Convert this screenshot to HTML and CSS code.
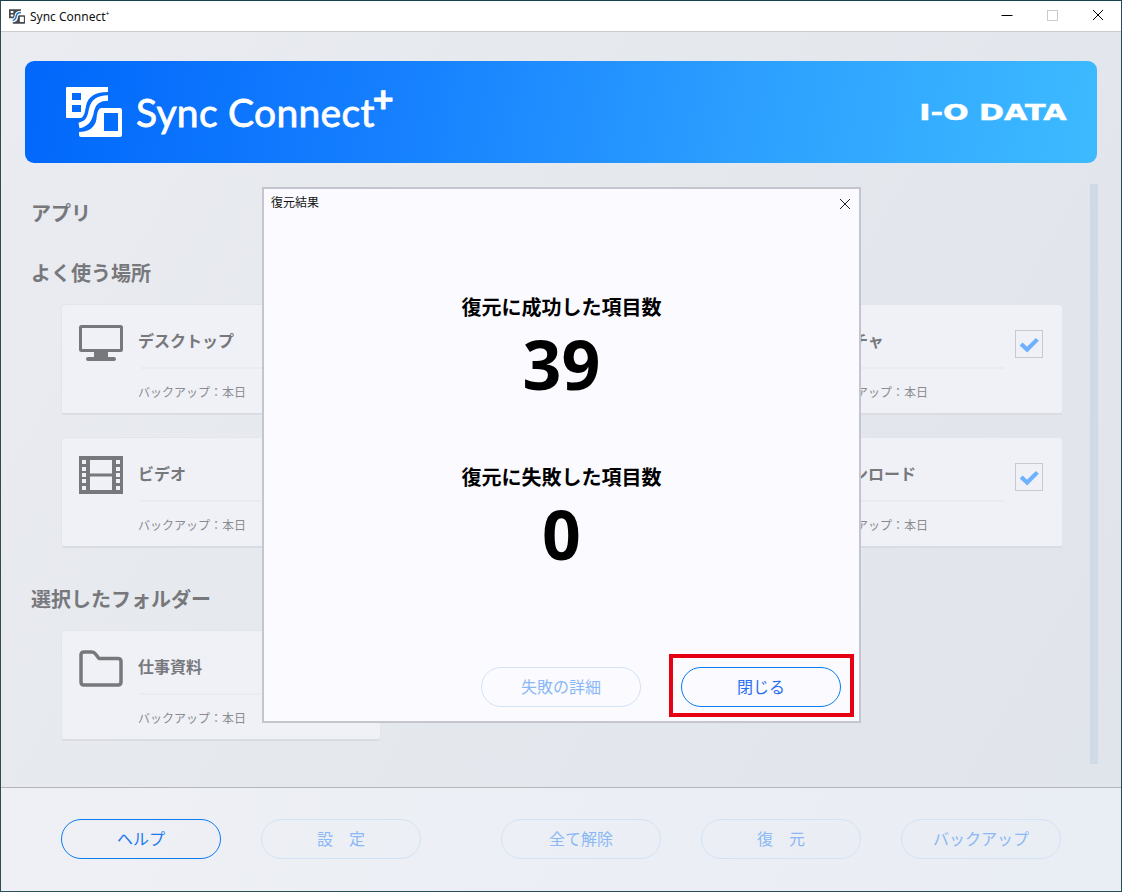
FILE: index.html
```html
<!DOCTYPE html>
<html lang="ja">
<head>
<meta charset="utf-8">
<title>Sync Connect+</title>
<link rel="stylesheet" href="styles.css">
</head>
<body>
<svg class="defs" width="0" height="0" aria-hidden="true">
  <symbol id="mark" viewBox="0 0 56 50">
    <path fill-rule="evenodd" d="M1 0H42V5C30 5 22 9 20 19C19 25 18 30 15 31H1Q0 31 0 30V1Q0 0 1 0ZM6 6V13H15V6ZM6 18V25H15V18Z"/>
    <path fill="none" stroke="currentColor" stroke-width="5.500" d="M42 11C32 11 27 15 25.500 23C24 32 21 37 13 38.500"/>
    <path fill-rule="evenodd" d="M35 21H54Q56 21 56 23V48Q56 50 54 50H15Q13 50 13 48V45C22 45 29 41 30.500 32C31 26 32 22 35 21ZM38 26V44H52V26Z"/>
  </symbol>
  <symbol id="check" viewBox="0 0 28 28">
    <path fill="none" stroke="#6eb1ff" stroke-width="4.500" d="M5.500 14L12 20L23 9"/>
  </symbol>
</svg>
<div class="window">
  <header class="titlebar">
    <svg class="title-icon"><use href="#mark"/></svg>
    <span class="title-text">Sync Connect<sup>+</sup></span>
    <div class="controls">
      <svg class="ctl" viewBox="0 0 46 30"><path d="M18.500 14.500H29.500" stroke="#000" stroke-width="1"/></svg>
      <svg class="ctl" viewBox="0 0 46 30"><rect x="18.500" y="9.500" width="10" height="10" fill="none" stroke="#ccc"/></svg>
      <svg class="ctl" viewBox="0 0 46 30"><path d="M18 9L28 19M28 9L18 19" stroke="#000" stroke-width="1"/></svg>
    </div>
  </header>
  <main class="main">
    <div class="banner">
      <div class="brand">
        <svg class="brand-mark"><use href="#mark"/></svg>
        <span class="brand-name">Sync Connect<sup>+</sup></span>
      </div>
      <span class="iodata">I-O DATA</span>
    </div>
    <div class="scroll-area">
      <div class="list">
        <h2 class="section-title first">アプリ</h2>
        <h2 class="section-title">よく使う場所</h2>
        <div class="card-grid">
          <article class="card">
            <svg class="card-icon" viewBox="0 0 44 37"><rect x="1.500" y="1.500" width="41" height="24" rx="1" fill="none" stroke="#77787c" stroke-width="3"/><path d="M15 27H29V32H15Z" fill="#77787c"/><rect x="7" y="32" width="30" height="4" rx="2" fill="#77787c"/></svg>
            <div class="card-body"><div class="card-name">デスクトップ</div><div class="card-rule"></div><div class="card-date">バックアップ：本日</div></div>
            <div class="checkbox"><svg viewBox="0 0 28 28"><use href="#check"/></svg></div>
          </article>
          <article class="card">
            <svg class="card-icon" viewBox="0 0 44 37"><rect x="1" y="1" width="42" height="27" fill="none"/></svg>
            <div class="card-body"><div class="card-name">ドキュメント</div><div class="card-rule"></div><div class="card-date">バックアップ：本日</div></div>
            <div class="checkbox"><svg viewBox="0 0 28 28"><use href="#check"/></svg></div>
          </article>
          <article class="card">
            <svg class="card-icon" viewBox="0 0 44 37"><rect x="1" y="1" width="42" height="27" fill="none"/></svg>
            <div class="card-body"><div class="card-name">ピクチャ</div><div class="card-rule"></div><div class="card-date">バックアップ：本日</div></div>
            <div class="checkbox"><svg viewBox="0 0 28 28"><use href="#check"/></svg></div>
          </article>
          <article class="card">
            <svg class="card-icon film" viewBox="0 0 44 38"><path fill="#77787c" fill-rule="evenodd" d="M0 0H44V38H0ZM11 4V17.500H33V4ZM11 20.500V34H33V20.500ZM3 4V8H7V4ZM3 11V15H7V11ZM3 17V21H7V17ZM3 23V27H7V23ZM3 30V34H7V30ZM37 4V8H41V4ZM37 11V15H41V11ZM37 17V21H41V17ZM37 23V27H41V23ZM37 30V34H41V30Z"/></svg>
            <div class="card-body"><div class="card-name">ビデオ</div><div class="card-rule"></div><div class="card-date">バックアップ：本日</div></div>
            <div class="checkbox"><svg viewBox="0 0 28 28"><use href="#check"/></svg></div>
          </article>
          <article class="card">
            <svg class="card-icon" viewBox="0 0 44 37"><rect x="1" y="1" width="42" height="27" fill="none"/></svg>
            <div class="card-body"><div class="card-name">ミュージック</div><div class="card-rule"></div><div class="card-date">バックアップ：本日</div></div>
            <div class="checkbox"><svg viewBox="0 0 28 28"><use href="#check"/></svg></div>
          </article>
          <article class="card">
            <svg class="card-icon" viewBox="0 0 44 37"><rect x="1" y="1" width="42" height="27" fill="none"/></svg>
            <div class="card-body"><div class="card-name">ダウンロード</div><div class="card-rule"></div><div class="card-date">バックアップ：本日</div></div>
            <div class="checkbox"><svg viewBox="0 0 28 28"><use href="#check"/></svg></div>
          </article>
        </div>
        <h2 class="section-title folders">選択したフォルダー</h2>
        <div class="card-grid">
          <article class="card">
            <svg class="card-icon folder" viewBox="0 0 44 37"><path fill="none" stroke="#77787c" stroke-width="3.500" stroke-linejoin="round" d="M2 5Q2 2 5 2H13Q15 2 16.500 4L20 8.500H39Q42 8.500 42 11.500V32Q42 35 39 35H5Q2 35 2 32Z"/></svg>
            <div class="card-body"><div class="card-name">仕事資料</div><div class="card-rule"></div><div class="card-date">バックアップ：本日</div></div>
            <div class="checkbox"><svg viewBox="0 0 28 28"><use href="#check"/></svg></div>
          </article>
        </div>
      </div>
      <div class="scrollbar"></div>
    </div>
  </main>
  <footer class="footer">
    <button class="btn active">ヘルプ</button>
    <button class="btn">設　定</button>
    <button class="btn push">全て解除</button>
    <button class="btn">復　元</button>
    <button class="btn">バックアップ</button>
  </footer>
</div>

<section class="dialog">
  <div class="dialog-head">
    <span class="dialog-title">復元結果</span>
    <svg class="dialog-close" viewBox="0 0 12 12"><path d="M1 1L11 11M11 1L1 11" stroke="#222" stroke-width="1" fill="none"/></svg>
  </div>
  <div class="result success">
    <div class="result-label">復元に成功した項目数</div>
    <div class="result-value">39</div>
  </div>
  <div class="result failure">
    <div class="result-label">復元に失敗した項目数</div>
    <div class="result-value">0</div>
  </div>
  <div class="dialog-actions">
    <button class="btn">失敗の詳細</button>
    <button class="btn active close">閉じる</button>
  </div>
</section>
<div class="highlight"></div>
</body>
</html>
```
FILE: styles.css
```css
* { box-sizing: border-box; }
html, body { margin: 0; padding: 0; }
body {
  width: 1122px;
  height: 892px;
  overflow: hidden;
  position: relative;
  font-family: "Noto Sans CJK JP", "Noto Sans", sans-serif;
  background: #e6e9ee;
}
.defs { position: absolute; }
.window {
  width: 1122px;
  height: 892px;
  display: flex;
  flex-direction: column;
  border: 1px solid #2b4d55;
  border-top-color: #17434d;
  background: linear-gradient(120deg, #eaecf1 0%, #e5e8ed 45%, #e0e4eb 100%);
}
.titlebar {
  flex: 0 0 31px;
  display: flex;
  align-items: center;
  background: #fff;
  border-bottom: 1px solid #ccc;
  padding-left: 8px;
}
.title-icon { width: 16px; height: 15px; color: #2a79c9; fill: #444a50; }
.title-text {
  font-family: "Noto Sans", sans-serif;
  font-size: 12px;
  color: #111;
  margin-left: 5px;
}
.title-text sup { font-size: 7px; line-height: 0; vertical-align: 5px; }
.controls { margin-left: auto; display: flex; }
.ctl { width: 46px; height: 30px; display: block; }
.main { flex: 1; padding: 29px 24px 0 24px; display: flex; flex-direction: column; }
.banner {
  flex: 0 0 102px;
  border-radius: 9px;
  background: linear-gradient(100deg, #0067fb 0%, #1680ff 35%, #2ea2ff 70%, #3dbaff 100%);
  display: flex;
  align-items: center;
  justify-content: space-between;
  padding: 0 30px 0 41px;
}
.brand { display: flex; align-items: center; color: #fff; }
.brand-mark { width: 56px; height: 50px; color: #fff; fill: #fff; }
.brand-name {
  font-family: "Lato", sans-serif;
  font-size: 39px;
  font-weight: 400;
  margin-left: 14px;
  line-height: 50px;
  letter-spacing: 0.3px;
  -webkit-text-stroke: 0.8px #fff;
}
.brand-name sup { font-size: 36px; font-weight: 700; line-height: 0; vertical-align: 15px; margin-left: -2px; }
.iodata {
  font-family: "DejaVu Sans", sans-serif;
  font-weight: 700;
  font-size: 22px;
  line-height: 22px;
  color: #fff;
  -webkit-text-stroke: 0.5px #fff;
  transform: scaleX(1.37);
  transform-origin: right center;
  white-space: nowrap;
  margin-top: 1px;
}
.scroll-area { flex: 1; display: flex; position: relative; }
.list { flex: 1; padding: 35px 0 0 6px; }
.section-title {
  margin: 30px 0 0 0;
  font-size: 20px;
  line-height: 30px;
  font-weight: 700;
  color: #77787c;
}
.section-title.first { margin-top: 0; }
.section-title.folders { margin-top: 36px; }
.card-grid {
  margin: 16px 0 0 30px;
  display: grid;
  grid-template-columns: repeat(3, 320px);
  column-gap: 21px;
  row-gap: 22px;
}
.card {
  height: 111px;
  background: #f0f1f6;
  border: 1px solid #e3e5ea;
  border-bottom: 2px solid #d9dce2;
  border-radius: 4px;
  display: flex;
  padding: 20px 0 0 17px;
  position: relative;
}
.card-icon { width: 44px; height: 37px; flex: none; display: block; }
.card-icon.film { height: 38px; margin-top: -2px; }
.card-icon.folder { margin-top: -1px; }
.card-body { margin-left: 15px; width: 185px; }
.card-name {
  font-size: 16px;
  line-height: 30px;
  font-weight: 700;
  color: #77787c;
}
.card-rule { height: 2px; background: #e9ebf0; margin: 12px 0 0 3px; width: 182px; }
.card-date {
  font-size: 12px;
  line-height: 18px;
  color: #8a8b8f;
  margin-top: 14px;
  white-space: nowrap;
}
.checkbox {
  position: absolute;
  left: 271px;
  top: 25px;
  width: 28px;
  height: 28px;
  border: 1px solid #c6c9cf;
  background: #f0f1f6;
}
.checkbox svg { display: block; width: 26px; height: 26px; }
.scrollbar {
  position: absolute;
  right: -1px;
  top: 21px;
  width: 8px;
  height: 580px;
  background: #d0dae4;
}
.footer {
  flex: 0 0 104px;
  border-top: 1px solid #b4b6ba;
  background: linear-gradient(120deg, #eef0f5 0%, #e9edf4 100%);
  display: flex;
  align-items: center;
  gap: 40px;
  padding: 0 0 1px 60px;
}
.btn {
  width: 160px;
  height: 40px;
  padding: 0 0 2px 0;
  border-radius: 20px;
  border: 1px solid #d2e3f6;
  background: transparent;
  color: #8ab8f5;
  font-family: "Noto Sans CJK JP", "Noto Sans", sans-serif;
  font-size: 16px;
  text-align: center;
}
.btn.active { border: 1.500px solid #0a7cf0; color: #2a6ff0; }
.footer .btn.active { color: #1f78ee; }
.btn.push { margin-left: 40px; }
.dialog {
  position: absolute;
  left: 262px;
  top: 187px;
  width: 599px;
  height: 536px;
  background: #fafaff;
  border: 2px solid #c4c5cf;
  display: flex;
  flex-direction: column;
}
.dialog-head { height: 26px; display: flex; align-items: center; justify-content: space-between; padding: 0 8px 0 7px; }
.dialog-title { font-size: 12px; line-height: 18px; color: #111; }
.dialog-close { width: 12px; height: 12px; margin-top: 3px; }
.result { text-align: center; color: #000; }
.result.success { margin-top: 77px; }
.result.failure { margin-top: 56px; }
.result-label { font-size: 20px; line-height: 30px; font-weight: 700; }
.result-value {
  font-family: "Noto Sans", sans-serif;
  font-weight: 700;
  font-size: 68px;
  line-height: 84px;
}
.dialog-actions {
  margin-top: auto;
  display: flex;
  justify-content: flex-end;
  gap: 40px;
  padding: 0 18px 14px 0;
}
.highlight {
  position: absolute;
  left: 669px;
  top: 654px;
  width: 185px;
  height: 63px;
  border: 4px solid #e60012;
}
```
